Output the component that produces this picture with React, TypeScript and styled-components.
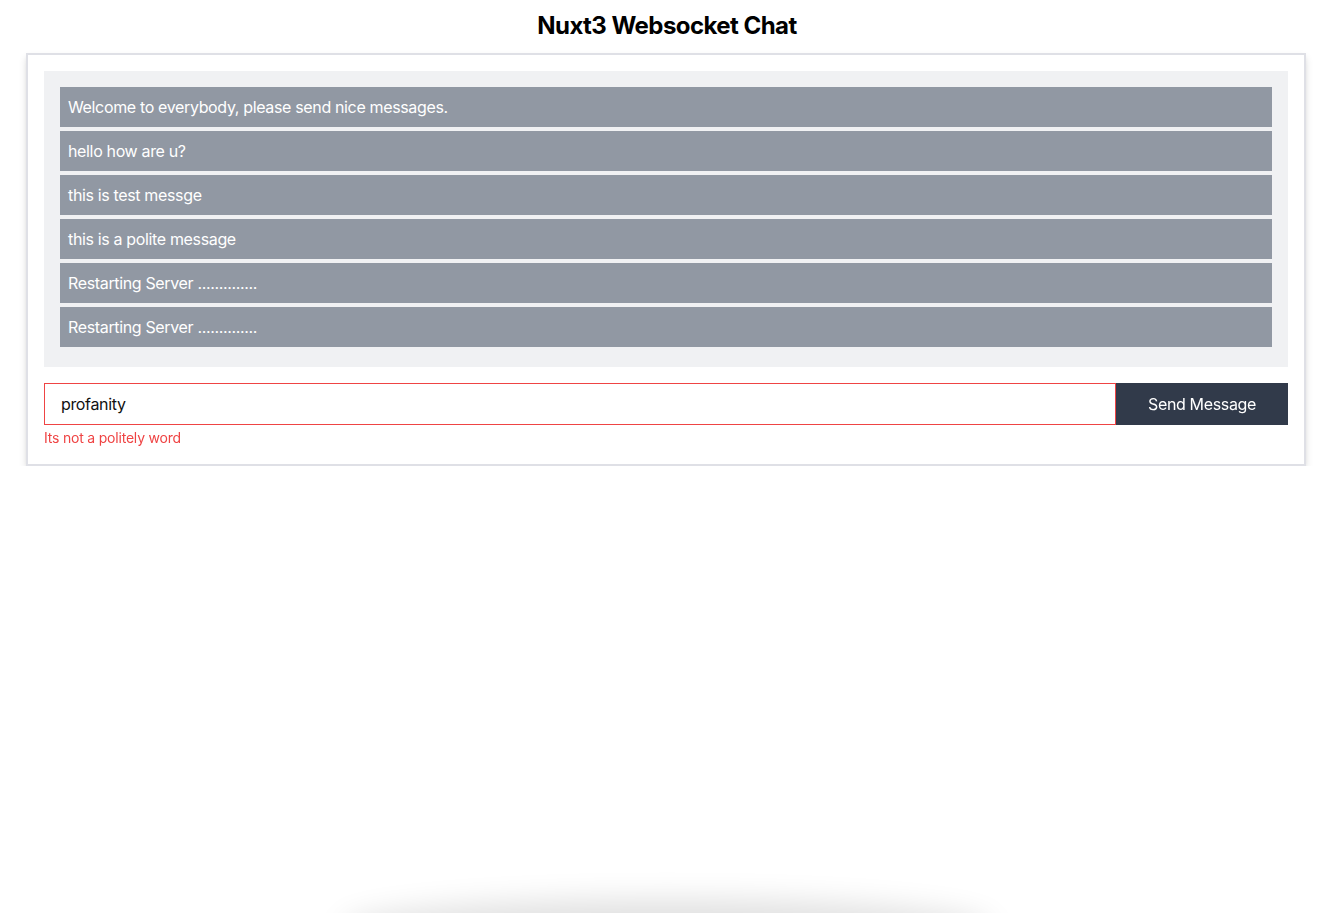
import React from "react";
import styled, { createGlobalStyle } from "styled-components";

const Global = createGlobalStyle`
  html, body { margin: 0; padding: 0; background: #ffffff; }
  body { font-family: Inter, "Noto Sans", Roboto, sans-serif; color: #000; letter-spacing: -0.35px; }
  * { box-sizing: border-box; }
`;

const Page = styled.div`
  display: flex;
  flex-direction: column;
  align-items: center;
  padding-top: 10px;
`;

const Title = styled.h1`
  margin: 0 0 11px;
  font-size: 24px;
  line-height: 32px;
  font-weight: 700;
  text-align: center;
  letter-spacing: -0.55px;
`;

const Card = styled.div`
  width: 1280px;
  margin-right: 2px;
  border: 2px solid #dfe0e6;
  background: #fff;
  padding: 16px;
  box-shadow: 0 4px 8px -1px rgba(0, 0, 0, 0.16), 0 2px 4px -2px rgba(0, 0, 0, 0.12);
`;

const Messages = styled.div`
  background: #f0f1f3;
  padding: 16px 16px 16px;
  display: flex;
  flex-direction: column;
`;

const Message = styled.div`
  background: #9198a3;
  color: #fff;
  height: 40px;
  display: flex;
  align-items: center;
  padding: 0 8px;
  margin-bottom: 4px;
  font-size: 16px;
`;

const Form = styled.form`
  display: flex;
  margin-top: 16px;
  height: 42px;
`;

const Input = styled.input`
  flex: 1;
  border: 1px solid #ef4444;
  padding: 0 16px;
  font-family: inherit;
  font-size: 16px;
  letter-spacing: -0.35px;
  color: #111;
  outline: none;
  height: 42px;
  caret-color: #000;
`;

const Button = styled.button`
  width: 172px;
  border: none;
  background: #313a4a;
  color: #fff;
  font-family: inherit;
  font-size: 16px;
  letter-spacing: -0.35px;
  height: 42px;
  cursor: pointer;
`;

const ErrorText = styled.div`
  color: #ef4444;
  font-size: 14px;
  line-height: 20px;
  margin-top: 3px;
  letter-spacing: -0.2px;
`;

const BottomGlow = styled.div`
  position: fixed;
  left: 350px;
  width: 634px;
  top: 913px;
  height: 40px;
  border-radius: 50%;
  box-shadow: 0 -4px 30px 10px rgba(0, 0, 0, 0.12);
`;

const messages = [
  "Welcome to everybody, please send nice messages.",
  "hello how are u?",
  "this is test messge",
  "this is a polite message",
  "Restarting Server ..............",
  "Restarting Server ..............",
];

export default function App() {
  return (
    <>
      <Global />
      <Page>
        <Title>Nuxt3 Websocket Chat</Title>
        <Card>
          <Messages>
            {messages.map((m, i) => (
              <Message key={i}>{m}</Message>
            ))}
          </Messages>
          <Form onSubmit={(e) => e.preventDefault()}>
            <Input defaultValue="profanity" autoFocus />
            <Button type="submit">Send Message</Button>
          </Form>
          <ErrorText>Its not a politely word</ErrorText>
        </Card>
      </Page>
      <BottomGlow />
    </>
  );
}
